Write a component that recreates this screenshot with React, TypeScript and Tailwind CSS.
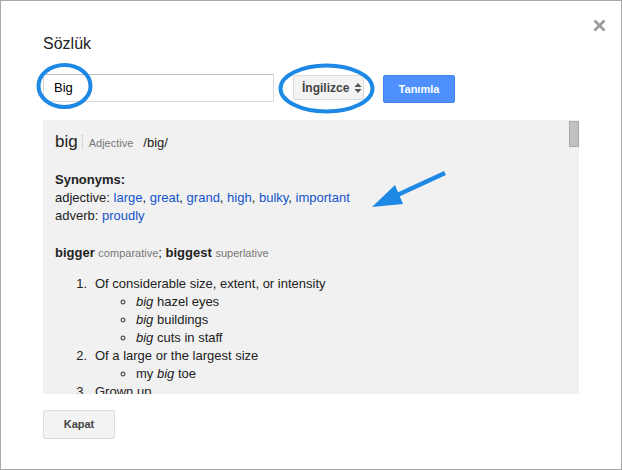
import React from "react";

function Num({ n, children }: { n: string; children: React.ReactNode }) {
  return (
    <div className="flex">
      <span className="w-[40px] shrink-0 text-right pr-[8px]">{n}</span>
      <div>{children}</div>
    </div>
  );
}

export default function App() {
  return (
    <div
      className="relative w-[622px] h-[470px] bg-white border border-[#a9a9a9] overflow-hidden"
      style={{ fontFamily: '"Liberation Sans", Arial, sans-serif' }}
    >
      {/* close X */}
      <svg className="absolute left-[592px] top-[18px]" width="13" height="13" viewBox="0 0 13 13">
        <path d="M1.5 1.5 L11.5 11.5 M11.5 1.5 L1.5 11.5" stroke="#9a9a9a" strokeWidth="2.6" />
      </svg>

      <div className="flex flex-col pl-[42px] pt-[34px]">
        <div className="text-[16px] leading-[18px] text-[#222]">Sözlük</div>

        <div className="flex items-start mt-[21px] h-[29px]">
          <div className="w-[231px] h-[28px] border border-[#d9d9d9] border-t-[#c0c0c0] flex items-center pl-[10px] text-[13px] text-black">
            Big
          </div>
          <div className="ml-[19px] mt-[1px] w-[71px] h-[25px] rounded-[2px] border border-[#dcdcdc] bg-[#f3f3f3] flex items-center pl-[8px] text-[12px] font-bold text-[#444]">
            <span>İngilizce</span>
            <svg className="ml-[5px]" width="8" height="12" viewBox="0 0 8 12">
              <path d="M4 1 L7.5 5 L0.5 5 Z M4 11 L7.5 7 L0.5 7 Z" fill="#555" />
            </svg>
          </div>
          <div className="ml-[19px] mt-[1px] w-[72px] h-[28px] rounded-[2px] bg-[#4d90fe] border border-[#3f84f3] flex items-center justify-center text-[11px] font-bold text-white">
            Tanımla
          </div>
        </div>

        <div className="relative mt-[17px] w-[536px] h-[274px] bg-[#f1f1f1] overflow-hidden">
          <div className="pl-[12px] pt-[11px] text-[13px] leading-[18px] text-[#222]">
            <div className="flex items-baseline h-[22px] leading-[22px]">
              <span className="text-[17px] text-[#222]">big</span>
              <span className="ml-[4px] mr-[6px] h-[14px] border-l border-dotted border-[#bbb] self-center"></span>
              <span className="text-[11px] text-[#777]">Adjective</span>
              <span className="ml-[10px] text-[13px] text-[#222]">/big/</span>
            </div>

            <div className="mt-[18px] font-bold">Synonyms:</div>
            <div>
              adjective:{" "}
              <span className="text-[#1155cc]">large</span>,{" "}
              <span className="text-[#1155cc]">great</span>,{" "}
              <span className="text-[#1155cc]">grand</span>,{" "}
              <span className="text-[#1155cc]">high</span>,{" "}
              <span className="text-[#1155cc]">bulky</span>,{" "}
              <span className="text-[#1155cc]">important</span>
            </div>
            <div>
              adverb: <span className="text-[#1155cc]">proudly</span>
            </div>

            <div className="mt-[19px]">
              <span className="font-bold">bigger</span>{" "}
              <span className="text-[11px] text-[#777]">comparative</span>;{" "}
              <span className="font-bold">biggest</span>{" "}
              <span className="text-[11px] text-[#777]">superlative</span>
            </div>

            <div className="mt-[13px]">
              <Num n="1.">
                Of considerable size, extent, or intensity
                <ul className="list-[circle] pl-[41px]">
                  <li><i>big</i> hazel eyes</li>
                  <li><i>big</i> buildings</li>
                  <li><i>big</i> cuts in staff</li>
                </ul>
              </Num>
              <Num n="2.">
                Of a large or the largest size
                <ul className="list-[circle] pl-[41px]">
                  <li>my <i>big</i> toe</li>
                </ul>
              </Num>
              <Num n="3.">Grown up</Num>
            </div>
          </div>
          {/* scrollbar thumb */}
          <div className="absolute right-0 top-[1px] w-[10px] h-[26px] bg-[#c1c1c1] border border-[#a8a8a8]"></div>
        </div>

        <div className="mt-[16px] w-[72px] h-[29px] rounded-[2px] border border-[#dcdcdc] bg-[#f3f3f3] flex items-center justify-center text-[11px] font-bold text-[#444]">
          Kapat
        </div>
      </div>

      {/* annotation overlay */}
      <svg className="absolute left-0 top-0 pointer-events-none" width="622" height="470" viewBox="0 0 622 470">
        <ellipse cx="63.5" cy="85" rx="26" ry="21" fill="none" stroke="#1e88e5" strokeWidth="4" />
        <ellipse cx="325.5" cy="87.5" rx="46" ry="23" fill="none" stroke="#1e88e5" strokeWidth="4" />
        <path d="M444 172 L392 196" stroke="#1e88e5" strokeWidth="4.5" strokeLinecap="butt" />
        <path d="M371 206 L394 184 L402 203 Z" fill="#1e88e5" />
      </svg>
    </div>
  );
}
